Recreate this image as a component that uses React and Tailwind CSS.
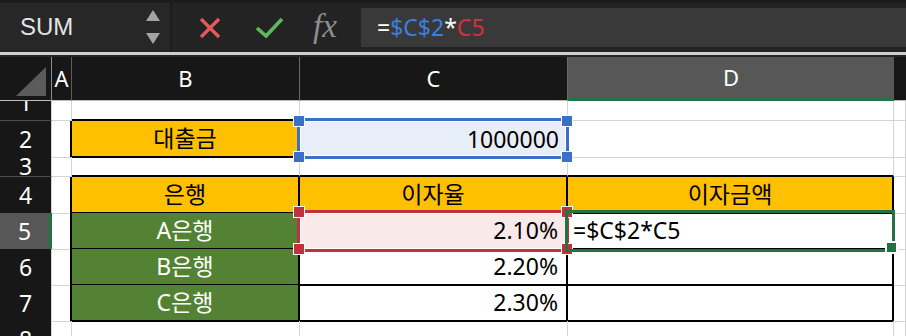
import React from 'react';

const COLS = 'grid grid-cols-[52px_20px_228px_268px_326px_1fr]';
const GRID = 'border-r border-b border-[#d4d4d4]';

function FormulaBar() {
    return (
        <div className="flex h-[52px] bg-[#232323] border-t-[3px] border-t-[#1c1c1c]">
            {/* name box */}
            <div className="flex w-[170px] items-center justify-between bg-[#272727] mb-[2px] pl-[20px] pr-[10px]">
                <span className="font-['Liberation_Sans',sans-serif] text-[24px] text-[#e4e4e4]">SUM</span>
                <div className="flex flex-col gap-[12px]">
                    <svg width="14" height="11" viewBox="0 0 14 11"><path d="M7 0 L14 11 L0 11 Z" fill="#a3a3a3" /></svg>
                    <svg width="14" height="11" viewBox="0 0 14 11"><path d="M0 0 L14 0 L7 11 Z" fill="#a3a3a3" /></svg>
                </div>
            </div>
            <div className="w-[2px] bg-[#1d1d1d]" />
            <div className="flex w-[189px] items-center">
                <svg className="ml-[26px]" width="24" height="24" viewBox="0 0 24 24">
                    <path d="M3 3 L21 21 M21 3 L3 21" stroke="#e35a5a" strokeWidth="3.4" />
                </svg>
                <svg className="ml-[33px]" width="30" height="24" viewBox="0 0 30 24">
                    <path d="M2 12 L11 20 L27 3" stroke="#5fb85c" strokeWidth="3.6" fill="none" />
                </svg>
                <span className="ml-[28px] -mt-[2px] font-['Liberation_Serif',serif] italic text-[33px] text-[#8d8d8d] leading-none">fx</span>
            </div>
            <div className="flex flex-1 items-center my-[5px] bg-[#393939] pl-[16px] text-[23px] text-white">
                <span>=</span>
                <span className="text-[#3c7fe0]">$C$2</span>
                <span>*</span>
                <span className="text-[#cf3340]">C5</span>
            </div>
        </div>
    );
}

function HeaderRow() {
    return (
        <div className={`${COLS} h-[44px] text-[22px] text-white`}>
            <div className="flex items-end justify-end bg-[#171717] border-r border-r-[#8c8c8c] border-b border-b-[#bdbdbd] pr-[5px] pb-[4px]">
                <svg width="30" height="29" viewBox="0 0 30 29"><path d="M30 0 L30 29 L0 29 Z" fill="#5b5b5b" /></svg>
            </div>
            <div className="flex items-center justify-center bg-[#171717] border-r border-r-[#5c5c5c] border-b border-b-[#bdbdbd]">A</div>
            <div className="flex items-center justify-center bg-[#171717] border-r border-r-[#6a6a6a] border-b border-b-[#bdbdbd]">B</div>
            <div className="flex items-center justify-center bg-[#171717] border-r border-r-[#6a6a6a] border-b border-b-[#bdbdbd]">C</div>
            <div className="flex items-center justify-center bg-[#575757] border-b-[3px] border-b-[#217346]">D</div>
            <div className="bg-[#171717] border-b border-b-[#bdbdbd]" />
        </div>
    );
}

function RowHead({ children, active, className = '' }) {
    return (
        <div className={`flex justify-center overflow-hidden text-[23px] text-white border-b border-b-[#4d4d4d] ${active ? 'bg-[#575757] border-r-[3px] border-r-[#217346]' : 'bg-[#171717] border-r border-r-[#d4d4d4]'} ${className}`}>
            {children}
        </div>
    );
}

const cell = 'flex items-center text-[23px] text-black';

export default function App() {
    return (
        <div className="relative h-[336px] w-[906px] overflow-hidden bg-white font-['Noto_Sans','Noto_Sans_CJK_KR',sans-serif]">
            <FormulaBar />
            <div className="h-[3px] bg-[#cfcfcf]" />
            <div className="h-[2px] bg-[#232323]" />
            <HeaderRow />

            {/* row 1 */}
            <div className={`${COLS} h-[20px]`}>
                <RowHead className="items-start"><span className="-mt-[14px] leading-[30px]">1</span></RowHead>
                <div className={GRID} />
                <div className="border-r border-r-[#d4d4d4] border-b-2 border-b-black" />
                <div className={GRID} />
                <div className={GRID} />
                <div className={GRID} />
            </div>

            {/* row 2 */}
            <div className={`${COLS} h-[36px]`}>
                <RowHead className="items-center">2</RowHead>
                <div className="border-r-2 border-r-black border-b border-b-[#d4d4d4]" />
                <div className={`${cell} justify-center bg-[#ffc000] border-r-2 border-r-black border-b-2 border-b-black`}>대출금</div>
                <div className={`${cell} justify-end bg-[#e8eef8] pr-[8px] ${GRID}`}>1000000</div>
                <div className={GRID} />
                <div className={GRID} />
            </div>

            {/* row 3 */}
            <div className={`${COLS} h-[20px]`}>
                <RowHead className="items-start"><span className="-mt-[9px] leading-[36px]">3</span></RowHead>
                <div className={GRID} />
                <div className="border-r border-r-[#d4d4d4] border-b-2 border-b-black" />
                <div className="border-r border-r-[#d4d4d4] border-b-2 border-b-black" />
                <div className="border-r border-r-[#d4d4d4] border-b-2 border-b-black" />
                <div className={GRID} />
            </div>

            {/* row 4 */}
            <div className={`${COLS} h-[36px]`}>
                <RowHead className="items-center">4</RowHead>
                <div className="border-r-2 border-r-black border-b border-b-[#d4d4d4]" />
                <div className={`${cell} justify-center bg-[#ffc000] border-r-2 border-b-2 border-black`}>은행</div>
                <div className={`${cell} justify-center bg-[#ffc000] border-r-2 border-b-2 border-black`}>이자율</div>
                <div className={`${cell} justify-center bg-[#ffc000] border-r-2 border-b-2 border-black`}>이자금액</div>
                <div className={GRID} />
            </div>

            {/* rows 5-7 */}
            {[
                ['5', 'A은행', '2.10%', true],
                ['6', 'B은행', '2.20%', false],
                ['7', 'C은행', '2.30%', false],
            ].map(([n, bank, rate, active]) => (
                <div key={n} className={`${COLS} h-[36px]`}>
                    <RowHead className="items-center" active={active}>{n}</RowHead>
                    <div className="border-r-2 border-r-black border-b border-b-[#d4d4d4]" />
                    <div className={`${cell} justify-center bg-[#548235] text-white border-r-2 border-b-2 border-black`}>{bank}</div>
                    <div className={`${cell} justify-end pr-[8px] border-r-2 border-b-2 border-black ${active ? 'bg-[#f9e9e9]' : ''}`}>{rate}</div>
                    <div className={`${cell} pl-[5px] border-r-2 border-b-2 border-black`}>{active ? '=$C$2*C5' : ''}</div>
                    <div className={GRID} />
                </div>
            ))}

            {/* row 8 */}
            <div className={`${COLS} h-[20px]`}>
                <RowHead className="items-start"><span className="leading-[36px]">8</span></RowHead>
                <div className={GRID} />
                <div className={GRID} />
                <div className={GRID} />
                <div className={GRID} />
                <div className={GRID} />
            </div>

            {/* C2 reference (blue) */}
            <div className="absolute left-[297px] top-[118px] h-[41px] w-[272px] border-[3px] border-[#3a6fcb]">
                <div className="h-full w-full border border-white" />
            </div>
            <div className="absolute left-[293px] top-[115px] h-[12px] w-[12px] border border-white bg-[#3a6fcb]" />
            <div className="absolute left-[561px] top-[115px] h-[12px] w-[12px] border border-white bg-[#3a6fcb]" />
            <div className="absolute left-[293px] top-[151px] h-[12px] w-[12px] border border-white bg-[#3a6fcb]" />
            <div className="absolute left-[561px] top-[151px] h-[12px] w-[12px] border border-white bg-[#3a6fcb]" />

            {/* C5 reference (red) */}
            <div className="absolute left-[297px] top-[210px] h-[42px] w-[272px] border-[3px] border-[#c1323e]">
                <div className="h-full w-full border border-white" />
            </div>
            <div className="absolute left-[293px] top-[206px] h-[12px] w-[12px] border border-white bg-[#c1323e]" />
            <div className="absolute left-[561px] top-[206px] h-[12px] w-[12px] border border-white bg-[#c1323e]" />
            <div className="absolute left-[293px] top-[243px] h-[12px] w-[12px] border border-white bg-[#c1323e]" />
            <div className="absolute left-[561px] top-[243px] h-[12px] w-[12px] border border-white bg-[#c1323e]" />

            {/* active cell D5 */}
            <div className="absolute left-[565px] top-[210px] h-[42px] w-[330px] border-[3px] border-[#217346]" />
            <div className="absolute left-[885px] top-[241px] h-[13px] w-[13px] border-2 border-white bg-[#217346]" />
        </div>
    );
}
